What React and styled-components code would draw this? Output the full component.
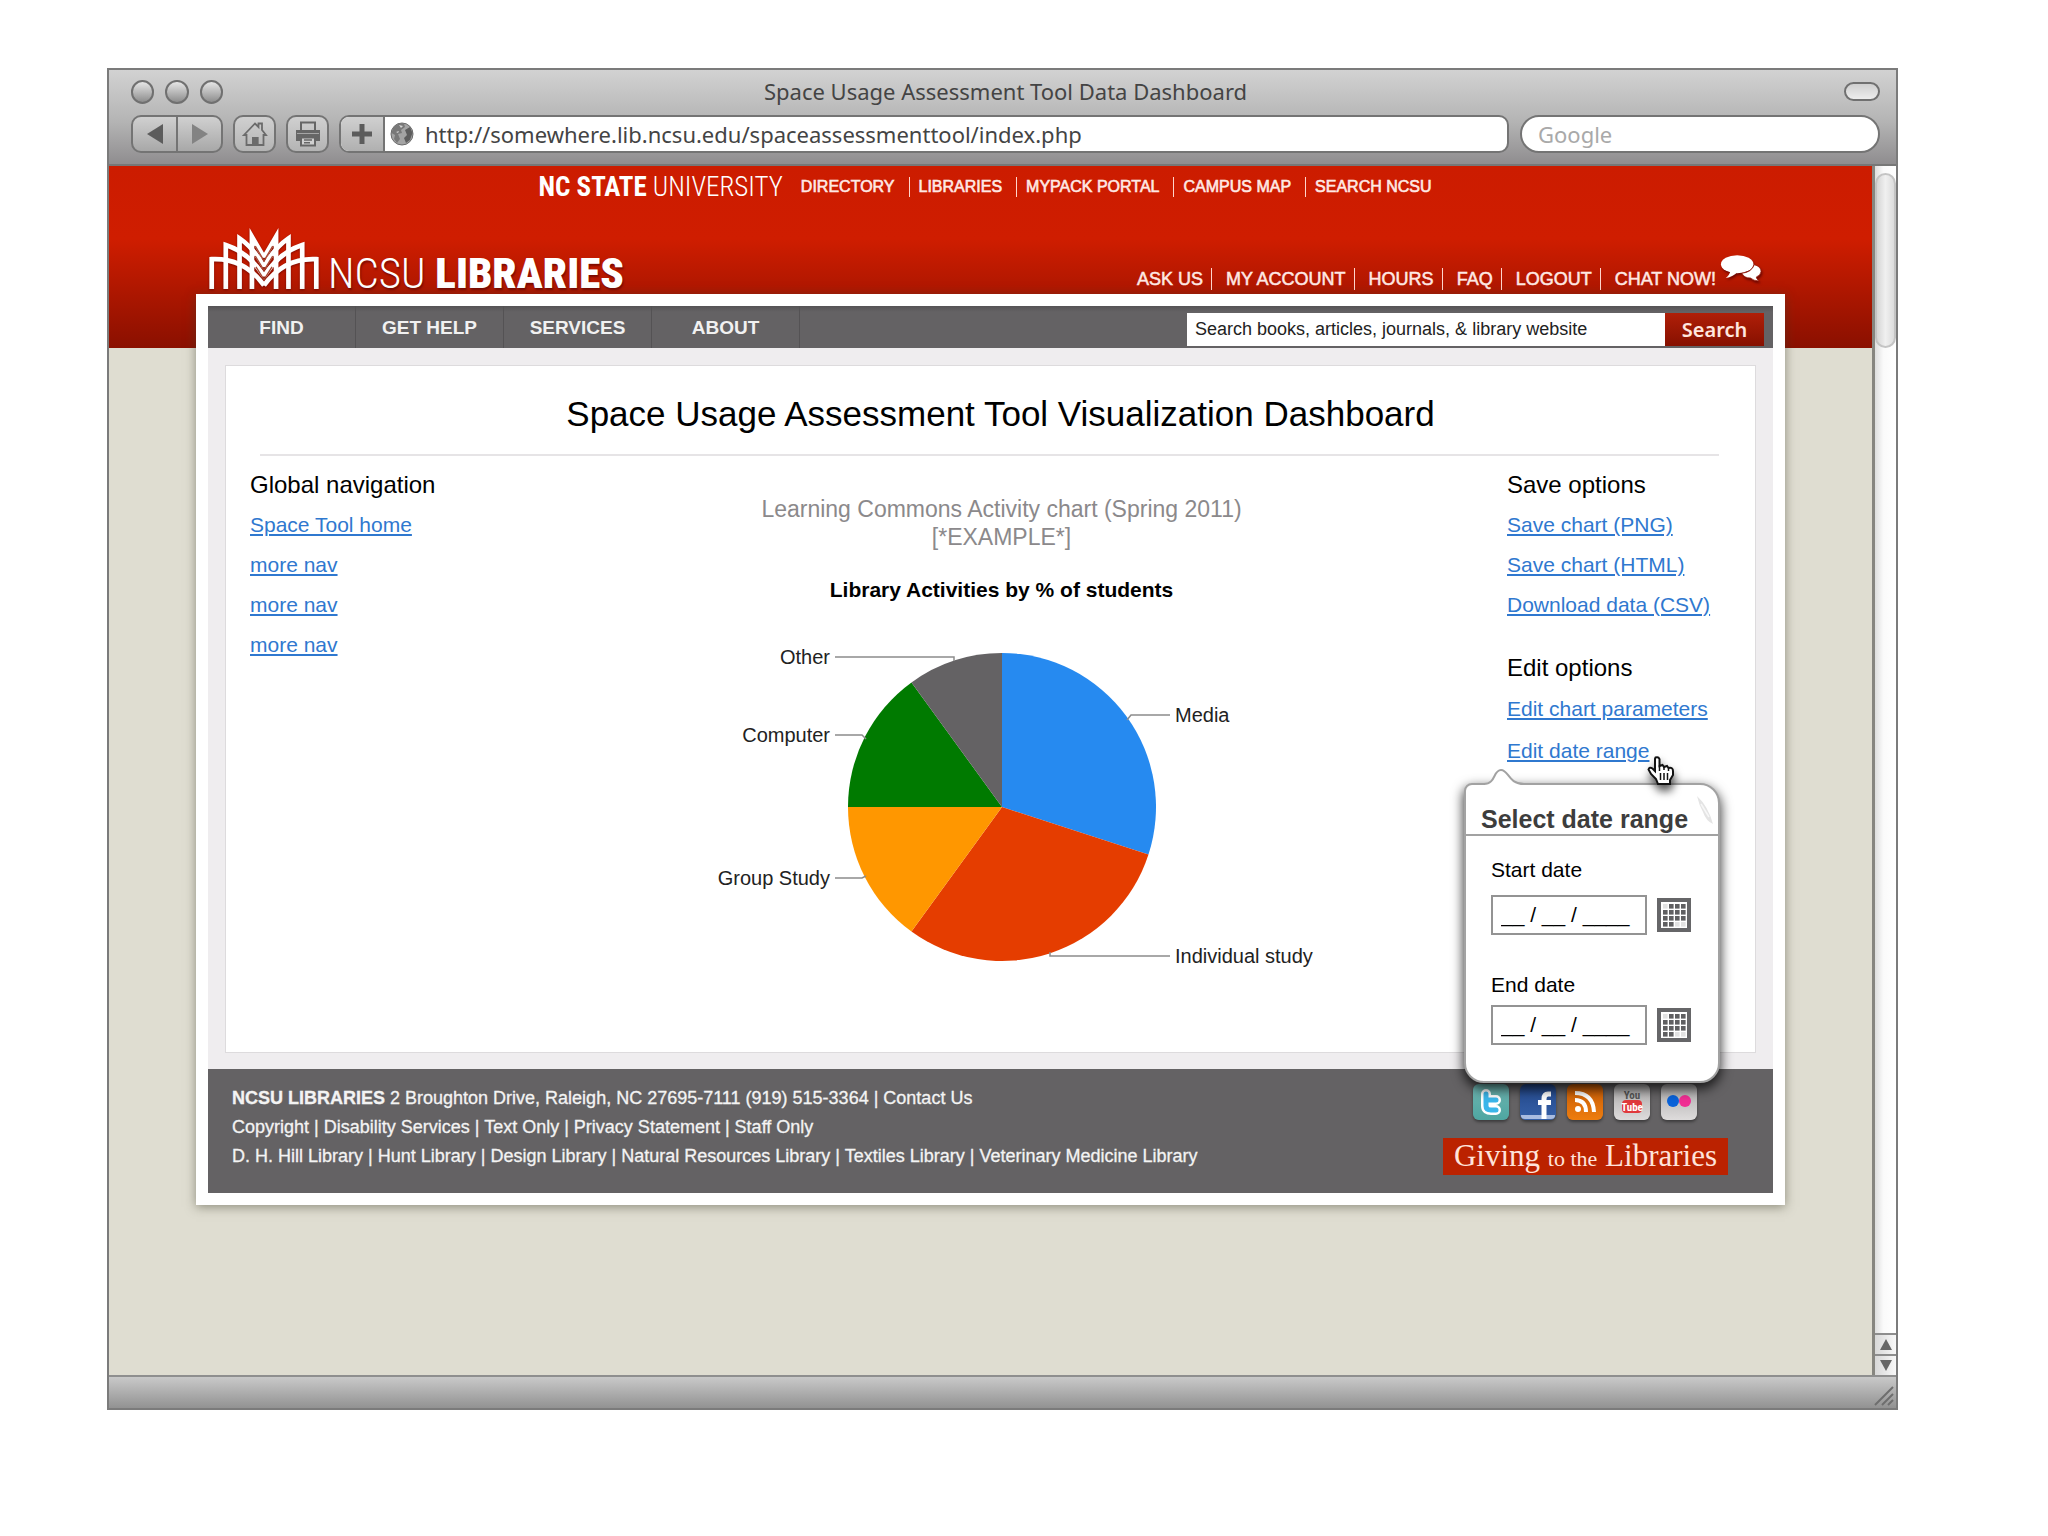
import styled, { createGlobalStyle } from "styled-components";

import { useState } from "react";


const slices = [
    { name: "Media", value: 30, color: "#268af0" },
    { name: "Individual study", value: 30, color: "#e53d00" },
    { name: "Group Study", value: 15, color: "#ff9700" },
    { name: "Computer", value: 15, color: "#007a00" },
    { name: "Other", value: 10, color: "#646264" },
];

// where every label and its leader line go, in chart units
const labels = [
    { name: "Media", x: 503, y: 82, anchor: "start", line: "M455 80 L459 75 H498" },
    { name: "Individual study", x: 503, y: 323, anchor: "start", line: "M378 312 V316 H498" },
    { name: "Group Study", x: 158, y: 245, anchor: "end", line: "M163 238 H190 L194 236" },
    { name: "Computer", x: 158, y: 102, anchor: "end", line: "M163 95 H190 L194 99" },
    { name: "Other", x: 158, y: 24, anchor: "end", line: "M163 17 H282 V21" },
];

const universityLinks = ["DIRECTORY", "LIBRARIES", "MYPACK PORTAL", "CAMPUS MAP", "SEARCH NCSU"];
const accountLinks = ["ASK US", "MY ACCOUNT", "HOURS", "FAQ", "LOGOUT", "CHAT NOW!"];
const menuItems = ["FIND", "GET HELP", "SERVICES", "ABOUT"];
const navLinks = ["Space Tool home", "more nav", "more nav", "more nav"];
const saveLinks = ["Save chart (PNG)", "Save chart (HTML)", "Download data (CSV)"];

const PieChart = () => {
    const cx = 330, cy = 167, r = 154;
    let total = 0;

    const point = (value) => {
        const angle = (value / 100) * 2 * Math.PI;
        return `${cx + r * Math.sin(angle)} ${cy - r * Math.cos(angle)}`;
    }

    return (
        <ChartSvg viewBox="0 0 660 340" role="img" aria-label="Library Activities by % of students">
            {slices.map((slice) => {
                const start = point(total);
                total += slice.value;
                return (
                    <path
                        key={slice.name}
                        d={`M${cx} ${cy} L${start} A${r} ${r} 0 0 1 ${point(total)} Z`}
                        fill={slice.color}
                    />
                )
            })}
            {labels.map((label) => (
                <g key={label.name}>
                    <path d={label.line} fill="none" stroke="#8c8c8c" strokeWidth="1.5" />
                    <text x={label.x} y={label.y} textAnchor={label.anchor}>{label.name}</text>
                </g>
            ))}
        </ChartSvg>
    )
}

const LibraryLogo = () => {
    const half = (
        <>
            <path d="M34 206 V117 Q130 112 190 195" />
            <path d="M76 206 V75 Q146 98 190 168" />
            <path d="M117 206 V55 Q160 84 190 140" />
            <path d="M154 206 V50 L190 112" />
        </>
    );
    return (
        <LogoSvg viewBox="24 24 332 182" fill="none" stroke="#fff" strokeWidth="14" strokeMiterlimit="6">
            {half}
            <g transform="matrix(-1 0 0 1 380 0)">{half}</g>
            <path d="M164 78 L190 122 L216 78 M164 108 L190 150 L216 108 M166 140 L190 178 L214 140" stroke="#a8442f" strokeWidth="4" />
        </LogoSvg>
    )
}

const HomeIcon = () => (
    <svg width="26" height="26" viewBox="0 0 26 26" fill="none" stroke="#6b6b6b" strokeWidth="1.8">
        <path d="M2 14 L13 2.5 L16.5 6 V2.5 H20 V9 L24 14 H21.5 V24 H15.5 V17 H11 V24 H4.5 V14 Z" />
        <path d="M11 17 H15.5 V24 H11 Z" fill="#6b6b6b" />
    </svg>
)

const PrintIcon = () => (
    <svg width="28" height="26" viewBox="0 0 28 26" fill="none" stroke="#666" strokeWidth="2">
        <path d="M7 9 V1.5 H21 V9" />
        <path d="M2 9 H26 V20 H22 V16 H6 V20 H2 Z" fill="#666" stroke="none" />
        <path d="M7 16.5 H21 V24.5 H7 Z" fill="#d0d0d0" />
        <path d="M3 12.5 H25" stroke="#a5a5a5" strokeWidth="1" />
        <path d="M10 19 H18 M10 21.8 H16" strokeWidth="1.4" />
    </svg>
)

const GlobeIcon = () => (
    <svg width="24" height="24" viewBox="0 0 24 24">
        <circle cx="12" cy="12" r="11" fill="#a4a4a4" stroke="#6a6a6a" />
        <path d="M3 6 Q8 0 14 1.5 L15 5 L11 8 L12 11 L8 12 L10 17 L7 21 L4 17 L5 13 L1.5 11 Z" fill="#787878" />
        <path d="M15 8 L20 5 L22.5 11 L20 18 L16 21 L14 16 L17 13 Z" fill="#5e5e5e" />
        <path d="M9 3 L13 4 L11 6 Z M6 10 L9 9 L8 11 Z" fill="#d4d4d4" />
    </svg>
)

const CalendarIcon = () => {
    const cells = [];
    for (let row = 0; row < 4; row++) {
        for (let col = 0; col < 4; col++) {
            const faint = (row === 0 && col === 0) || (row === 3 && col > 1);
            cells.push(
                <rect
                    key={`${row}-${col}`}
                    x={6 + col * 6}
                    y={6 + row * 6}
                    width="4.6"
                    height="4.6"
                    fill={faint ? "#e2e2e2" : "#5f5f61"}
                />
            );
        }
    }
    return (
        <svg width="34" height="34" viewBox="0 0 34 34">
            <rect width="34" height="34" fill="#666668" />
            <rect x="4" y="4" width="26" height="26" fill="#fff" />
            {cells}
        </svg>
    )
}

const ChatIcon = () => (
    <ChatSvg viewBox="0 0 44 28" fill="#fff">
        <ellipse cx="18" cy="9.5" rx="17" ry="9.5" />
        <path d="M11 16 Q10 21 6 24 Q14 23 19 17 Z" />
        <path d="M23 19 Q33 18 36 10 Q43 12 43 17 Q43 21 38 23 Q38 25 41 27 Q35 27 32 24 Q25 24 23 19 Z" stroke="#9a1a0b" strokeWidth="0.8" />
    </ChatSvg>
)

const HandCursor = () => (
    <CursorSvg viewBox="0 0 28 30">
        <path
            d="M8.5 1.5 Q11.5 0.5 12.5 3 V10 L15.5 9 L17 11 L20 10 L21.5 12 Q26 11 26 15 V19 L23 24 V28 H11 L9 23 L4 18 L1.5 13.5 Q2.5 10.5 5.5 12.5 L8 15 V3 Z"
            fill="#fff"
            stroke="#111"
            strokeWidth="2"
        />
        <path d="M13.5 17 V24 M17 17 V24 M20.5 17 V24 M12.5 9 V15 M17 10.5 V14 M21.5 12 V15" stroke="#111" strokeWidth="1.5" />
    </CursorSvg>
)

const SocialIcons = () => (
    <SocialList>
        <SocialLink href="#" aria-label="Twitter" $from="#6fb5b1" $to="#4ea6a1">
            <svg width="36" height="36" viewBox="0 0 36 36">
                <path d="M13 10 V22 Q13 26 18 26 H23 M13 16 H23" fill="none" stroke="#fff" strokeWidth="10" strokeLinecap="round" strokeLinejoin="round" />
                <path d="M13 10 V22 Q13 26 18 26 H23 M13 16 H23" fill="none" stroke="#3bb6ea" strokeWidth="5" strokeLinecap="round" strokeLinejoin="round" />
            </svg>
        </SocialLink>
        <SocialLink href="#" aria-label="Facebook" $from="#24488a" $to="#3560a8">
            <svg width="36" height="36" viewBox="0 0 36 36">
                <path d="M1 31 H35 V32 Q35 35 31 35 H5 Q1 35 1 32 Z" fill="#a9bce0" />
                <path d="M24 35 V15 Q24 10 28 10 H31 M18 18.5 H31" fill="none" stroke="#fff" strokeWidth="5" />
            </svg>
        </SocialLink>
        <SocialLink href="#" aria-label="RSS" $from="#c55a06" $to="#ee7d0e">
            <svg width="36" height="36" viewBox="0 0 36 36" fill="none" stroke="#fff" strokeWidth="4">
                <circle cx="11" cy="25" r="3" fill="#fff" stroke="none" />
                <path d="M8 16 Q19 16 19 28 M8 9 Q26 9 27 28" />
            </svg>
        </SocialLink>
        <SocialLink href="#" aria-label="YouTube" $from="#a9a7a7" $to="#dedcdc">
            <YouTubeSvg viewBox="0 0 36 36">
                <text x="18" y="15" fill="#555">You</text>
                <rect x="8" y="16" width="20" height="13" rx="4" fill="#e0393c" />
                <text x="18" y="27" fill="#fff">Tube</text>
            </YouTubeSvg>
        </SocialLink>
        <SocialLink href="#" aria-label="Flickr" $from="#a9a7a7" $to="#dedcdc">
            <svg width="36" height="36" viewBox="0 0 36 36">
                <circle cx="12" cy="17" r="6" fill="#0a62d8" />
                <circle cx="24" cy="17" r="6" fill="#f02e93" />
            </svg>
        </SocialLink>
    </SocialList>
)

const DateField = ({ id, label, gap }) => {
    const [value, setValue] = useState("__ / __ / ____");

    return (
        <Field $gap={gap}>
            <label htmlFor={id}>{label}</label>
            <FieldRow>
                <DateInput id={id} name={id} type="text" value={value} onChange={(e) => setValue(e.target.value)} />
                <PlainButton type="button" aria-label={`Pick ${label}`}>
                    <CalendarIcon />
                </PlainButton>
            </FieldRow>
        </Field>
    )
}

const DateRangePopup = () => (
    <Popup>
        <PopupTip viewBox="0 0 48 17">
            <path d="M1 15 C12 15 9 1 17 1 C25 1 24 15 40 15 V17 H1 Z" fill="#fff" />
            <path d="M0 15 C12 15 9 1 17 1 C25 1 24 15 40 15" fill="none" stroke="#a2a2a2" strokeWidth="2" />
        </PopupTip>
        <PopupTitle>Select date range</PopupTitle>
        <PopupCorner viewBox="0 0 18 30">
            <path d="M1 1 Q12 11 17 29 Q10 26 7 17 Q3 10 1 1 Z" fill="#e4e4e4" />
            <path d="M5 9 L13 22" stroke="#f7f7f7" strokeWidth="1.5" />
        </PopupCorner>
        <PopupForm>
            <DateField id="start-date" label="Start date" gap="13px" />
            <DateField id="end-date" label="End date" gap="8px" />
        </PopupForm>
    </Popup>
)

const App = () => {
    const [showPopup, setShowPopup] = useState(true);
    const [url, setUrl] = useState("http://somewhere.lib.ncsu.edu/spaceassessmenttool/index.php");
    const [query, setQuery] = useState("Search books, articles, journals, & library website");

    const handleToggle = (e) => {
        e.preventDefault();
        setShowPopup(!showPopup);
    }

    return (
        <>
            <GlobalStyle />
            <BrowserWindow>
                <Chrome>
                    <TitleBar>
                        <Lights>
                            <Light type="button" aria-label="Close" />
                            <Light type="button" aria-label="Minimize" />
                            <Light type="button" aria-label="Zoom" />
                        </Lights>
                        <WindowTitle>Space Usage Assessment Tool Data Dashboard</WindowTitle>
                        <Pill type="button" aria-label="Toggle toolbar" />
                    </TitleBar>
                    <Toolbar>
                        <ButtonPair>
                            <PairButton type="button" aria-label="Back">
                                <svg width="16" height="20" viewBox="0 0 16 20"><path d="M16 0 V20 L0 10 Z" fill="#5c5c5c" /></svg>
                            </PairButton>
                            <PairButton type="button" aria-label="Forward">
                                <svg width="16" height="20" viewBox="0 0 16 20"><path d="M0 0 V20 L16 10 Z" fill="#838383" /></svg>
                            </PairButton>
                        </ButtonPair>
                        <ToolButton type="button" aria-label="Home"><HomeIcon /></ToolButton>
                        <ToolButton type="button" aria-label="Print"><PrintIcon /></ToolButton>
                        <AddressBar>
                            <AddButton type="button" aria-label="Add bookmark">
                                <svg width="22" height="22" viewBox="0 0 22 22"><path d="M11 1 V21 M1 11 H21" stroke="#5c5c5c" strokeWidth="5" /></svg>
                            </AddButton>
                            <GlobeIcon />
                            <AddressInput type="text" aria-label="Address" value={url} onChange={(e) => setUrl(e.target.value)} />
                        </AddressBar>
                        <GoogleInput type="text" aria-label="Web search" placeholder="Google" />
                    </Toolbar>
                </Chrome>

                <Viewport>
                    <Page>
                        <PageHeader>
                            <UniversityBar>
                                <UniversityName href="#"><b>NC STATE</b> UNIVERSITY</UniversityName>
                                {universityLinks.map((link) => <UniversityLink key={link} href="#">{link}</UniversityLink>)}
                            </UniversityBar>
                            <BrandBar>
                                <Brand href="#">
                                    <LibraryLogo />
                                    <BrandName>NCSU <b>LIBRARIES</b></BrandName>
                                </Brand>
                                <AccountNav>
                                    {accountLinks.map((link) => <AccountLink key={link} href="#">{link}</AccountLink>)}
                                    <ChatIcon />
                                </AccountNav>
                            </BrandBar>
                        </PageHeader>

                        <Container>
                            <MenuBar>
                                {menuItems.map((item) => <MenuLink key={item} href="#">{item}</MenuLink>)}
                                <SearchForm onSubmit={(e) => e.preventDefault()}>
                                    <SearchInput type="text" aria-label="Search the library" value={query} onChange={(e) => setQuery(e.target.value)} />
                                    <SearchButton type="submit">Search</SearchButton>
                                </SearchForm>
                            </MenuBar>

                            <Content>
                                <Panel>
                                    <PageTitle>Space Usage Assessment Tool Visualization Dashboard</PageTitle>
                                    <Divider />
                                    <Columns>
                                        <nav>
                                            <SideHeading>Global navigation</SideHeading>
                                            <LinkList>
                                                {navLinks.map((link, i) => <li key={i}><SideLink href="#">{link}</SideLink></li>)}
                                            </LinkList>
                                        </nav>
                                        <ChartArea>
                                            <Caption>Learning Commons Activity chart (Spring 2011)<br />[*EXAMPLE*]</Caption>
                                            <ChartTitle>Library Activities by % of students</ChartTitle>
                                            <PieChart />
                                        </ChartArea>
                                        <Options>
                                            <section>
                                                <SideHeading>Save options</SideHeading>
                                                <LinkList>
                                                    {saveLinks.map((link) => <li key={link}><SideLink href="#">{link}</SideLink></li>)}
                                                </LinkList>
                                            </section>
                                            <section>
                                                <SideHeading>Edit options</SideHeading>
                                                <LinkList $line="42px">
                                                    <li><SideLink href="#">Edit chart parameters</SideLink></li>
                                                    <li>
                                                        <SideLink href="#" onClick={handleToggle}>Edit date range</SideLink>
                                                        {showPopup && <DateRangePopup />}
                                                        <HandCursor />
                                                    </li>
                                                </LinkList>
                                            </section>
                                        </Options>
                                    </Columns>
                                </Panel>
                            </Content>

                            <Footer>
                                <FooterText>
                                    <p><b>NCSU LIBRARIES</b> 2 Broughton Drive, Raleigh, NC 27695-7111 (919) 515-3364 | <a href="#">Contact Us</a></p>
                                    <p><a href="#">Copyright</a> | <a href="#">Disability Services</a> | <a href="#">Text Only</a> | <a href="#">Privacy Statement</a> | <a href="#">Staff Only</a></p>
                                    <p><a href="#">D. H. Hill Library</a> | <a href="#">Hunt Library</a> | <a href="#">Design Library</a> | <a href="#">Natural Resources Library</a> | <a href="#">Textiles Library</a> | <a href="#">Veterinary Medicine Library</a></p>
                                </FooterText>
                                <FooterSide>
                                    <SocialIcons />
                                    <GivingLink href="#">Giving <small>to the</small> Libraries</GivingLink>
                                </FooterSide>
                            </Footer>
                        </Container>
                    </Page>

                    <Scrollbar>
                        <Thumb />
                        <ScrollButton type="button" aria-label="Scroll up">
                            <svg width="12" height="11" viewBox="0 0 12 11"><path d="M6 0 L12 11 H0 Z" fill="#666" /></svg>
                        </ScrollButton>
                        <ScrollButton type="button" aria-label="Scroll down">
                            <svg width="12" height="11" viewBox="0 0 12 11"><path d="M0 0 H12 L6 11 Z" fill="#666" /></svg>
                        </ScrollButton>
                    </Scrollbar>
                </Viewport>

                <StatusBar>
                    <svg width="20" height="20" viewBox="0 0 20 20" stroke="#6e6e6e" strokeWidth="2">
                        <path d="M1 19 L19 1 M8 19 L19 8 M14 19 L19 14" />
                    </svg>
                </StatusBar>
            </BrowserWindow>
        </>
    )
}

const GlobalStyle = createGlobalStyle`
    *{
        box-sizing: border-box;
    }

    body{
        margin: 0;
        background-color: white;
        color: black;
        font-family: "Liberation Sans", Arial, sans-serif;
        font-size: 21px;
    }

    h1, h2, p, ul{
        margin: 0;
        padding: 0;
        font-weight: normal;
    }

    a{
        color: inherit;
        text-decoration: none;
    }

    button, input{
        font: inherit;
        color: inherit;
        margin: 0;
        padding: 0;
        border: none;
    }

    svg{
        display: block;
        flex-shrink: 0;
    }
`

const BrowserWindow = styled.div`
    margin: 68px 150px 0 107px;
    border: 2px solid #7b7b7b;
    font-family: "Liberation Sans", Arial, sans-serif;
`

const Chrome = styled.header`
    padding: 9px 16px 11px 22px;
    background: linear-gradient(#d2d2d2, #b4b4b4 55%, #8f8d8f);
    border-bottom: 2px solid #777;
    color: #444;
    font-family: "Noto Sans", "Open Sans", sans-serif;
    font-size: 22px;
`

const TitleBar = styled.div`
    display: grid;
    grid-template-columns: 92px 1fr 92px;
    align-items: center;
    height: 25px;
    margin-bottom: 11px;
`

const Lights = styled.div`
    display: flex;
    gap: 11px;
`

const Light = styled.button`
    width: 24px;
    height: 24px;
    border: 2px solid #707070;
    border-radius: 50%;
    background: linear-gradient(#e6e6e6, #8d8d8d);
`

const WindowTitle = styled.div`
    text-align: center;
    line-height: 25px;
    white-space: nowrap;
`

const Pill = styled.button`
    justify-self: end;
    width: 36px;
    height: 19px;
    border: 2px solid #707070;
    border-radius: 10px;
    background: linear-gradient(#cfcfcf, #ededed);
`

const Toolbar = styled.div`
    display: flex;
    align-items: center;
    height: 38px;
`

const ToolButton = styled.button`
    display: flex;
    align-items: center;
    justify-content: center;
    width: 43px;
    height: 38px;
    margin-right: 10px;
    border: 2px solid #747474;
    border-radius: 10px;
    background: linear-gradient(#d0d0d0, #b4b4b4);
`

const ButtonPair = styled.div`
    display: flex;
    width: 92px;
    height: 38px;
    margin-right: 10px;
    border: 2px solid #747474;
    border-radius: 10px;
    background: linear-gradient(#d0d0d0, #a8a8a8);
`

const PairButton = styled.button`
    flex: 1;
    display: flex;
    align-items: center;
    justify-content: center;
    background: none;

    & + &{
        border-left: 2px solid #747474;
    }
`

const AddressBar = styled.div`
    flex: 1;
    display: flex;
    align-items: center;
    height: 38px;
    border: 2px solid #747474;
    border-radius: 10px;
    background-color: white;
    overflow: hidden;
`

const AddButton = styled.button`
    display: flex;
    align-items: center;
    justify-content: center;
    width: 44px;
    height: 34px;
    margin-right: 5px;
    border-right: 2px solid #747474;
    background: linear-gradient(#d0d0d0, #b0b0b0);
`

const AddressInput = styled.input`
    flex: 1;
    min-width: 0;
    margin-left: 11px;
    outline: none;
    background: none;
`

const GoogleInput = styled.input`
    width: 360px;
    height: 38px;
    margin-left: 11px;
    padding: 0 16px;
    border: 2px solid #747474;
    border-radius: 19px;
    background-color: white;

    &::placeholder{
        color: #a9a9a9;
        opacity: 1;
    }
`

const Viewport = styled.div`
    display: flex;
    align-items: stretch;
`

const Page = styled.div`
    flex: 1;
    padding: 0 87px 170px;
    background: linear-gradient(#cc1c00, #cf1d00 40%, #8a1000) no-repeat 0 0 / 100% 182px #dfddd1;
`

const PageHeader = styled.header`
    display: flex;
    flex-direction: column;
    justify-content: space-between;
    height: 128px;
    padding: 6px 23px 0 12px;
    color: #ffe9e4;
`

const UniversityBar = styled.div`
    display: flex;
    justify-content: center;
    align-items: center;
    height: 30px;
    font-size: 16px;
`

const UniversityName = styled.a`
    margin-right: 18px;
    color: white;
    font-family: "Roboto Condensed", "Liberation Sans", sans-serif;
    font-size: 27px;
    font-weight: 300;

    b{
        font-weight: 700;
    }
`

const UniversityLink = styled.a`
    padding-right: 14px;
    line-height: 20px;
    -webkit-text-stroke: 0.6px;

    & + &{
        padding-left: 9px;
        border-left: 1px solid #ffd5cc;
    }

    &:last-child{
        padding-right: 0;
    }
`

const BrandBar = styled.div`
    display: flex;
    justify-content: space-between;
    align-items: flex-end;
`

const Brand = styled.a`
    display: flex;
    align-items: flex-end;
    gap: 8px;
    color: white;
    text-shadow: 1px 2px 2px rgba(80, 0, 0, 0.6);
`

const LogoSvg = styled.svg`
    width: 112px;
    height: 61px;
    margin-bottom: 5px;
    filter: drop-shadow(0 1px 1px rgba(80, 0, 0, 0.6));
`

const BrandName = styled.span`
    font-family: "Roboto Condensed", "Liberation Sans", sans-serif;
    font-size: 43px;
    font-weight: 300;
    line-height: 42px;

    b{
        font-weight: 900;
    }
`

const AccountNav = styled.nav`
    display: flex;
    align-items: flex-end;
    padding-bottom: 4px;
    font-size: 18px;
    line-height: 22px;
`

const AccountLink = styled.a`
    padding-right: 8px;
    -webkit-text-stroke: 0.5px;

    & + &{
        padding-left: 14px;
        border-left: 1px solid #ffd5cc;
    }

    &:last-of-type{
        padding-right: 4px;
    }
`

const ChatSvg = styled.svg`
    width: 42px;
    height: 27px;
    margin-bottom: 8px;
    filter: drop-shadow(1px 2px 1px rgba(80, 0, 0, 0.7));
`

const Container = styled.main`
    position: relative;
    border: 12px solid white;
    background-color: #efedef;
    box-shadow: 0 2px 10px rgba(60, 60, 40, 0.5);
`

const MenuBar = styled.nav`
    display: flex;
    align-items: stretch;
    height: 42px;
    padding-right: 9px;
    background: linear-gradient(#555355, #646264 6px);
    color: #f1f1f1;
    font-size: 19px;
    font-weight: bold;
`

const MenuLink = styled.a`
    width: 148px;
    border-right: 1px solid #545254;
    line-height: 43px;
    text-align: center;
`

const SearchForm = styled.form`
    display: flex;
    margin: 7px 0 2px auto;
    color: #222;
    font-size: 18px;
    font-weight: normal;
`

const SearchInput = styled.input`
    width: 478px;
    padding: 0 8px;
    background-color: white;
`

const SearchButton = styled.button`
    width: 99px;
    background: linear-gradient(#b01f08, #861000);
    color: #ffe6df;
    font-family: "Noto Sans", "Open Sans", sans-serif;
    font-size: 20px;
    font-weight: 600;
    line-height: 30px;
`

const Content = styled.div`
    padding: 17px 17px 16px;
`

const Panel = styled.section`
    padding: 0 0 72px;
    border: 1px solid #dddbdd;
    background-color: white;
`

const PageTitle = styled.h1`
    padding: 26px 0 0 20px;
    font-size: 35px;
    line-height: 44px;
    text-align: center;
`

const Divider = styled.hr`
    height: 2px;
    margin: 18px 36px 0 34px;
    border: none;
    background-color: #e6e4e6;
`

const Columns = styled.div`
    display: grid;
    grid-template-columns: 246px 1fr 248px;
    margin-left: 24px;
    padding-top: 14px;
`

const SideHeading = styled.h2`
    margin-bottom: 5px;
    font-size: 24px;
    line-height: 30px;
`

const LinkList = styled.ul`
    list-style: none;
    line-height: ${(p) => p.$line || "40px"};

    li{
        position: relative;
        white-space: nowrap;
    }
`

const SideLink = styled.a`
    color: #2f78cf;
    text-decoration: underline;
`

const ChartArea = styled.div`
    display: flex;
    flex-direction: column;
    align-items: center;
    padding-top: 25px;
`

const Caption = styled.p`
    margin-bottom: 27px;
    color: #8b898b;
    font-size: 23px;
    line-height: 28px;
    text-align: center;
`

const ChartTitle = styled.h2`
    margin-bottom: 38px;
    font-size: 21px;
    font-weight: bold;
    line-height: 24px;
`

const ChartSvg = styled.svg`
    width: 660px;
    height: 340px;
    font-size: 20px;
    fill: #222;
`

const Options = styled.div`
    display: flex;
    flex-direction: column;
    gap: 28px;
`

const Popup = styled.div`
    position: absolute;
    top: 53px;
    left: -43px;
    z-index: 1;
    width: 256px;
    height: 300px;
    border: 2px solid #a2a2a2;
    border-radius: 8px 20px 20px 20px;
    background-color: white;
    box-shadow: 0 5px 12px 1px rgba(0, 0, 0, 0.75);
    line-height: 24px;
`

const PopupTip = styled.svg`
    position: absolute;
    top: -16px;
    left: 18px;
    width: 48px;
    height: 17px;
`

const PopupTitle = styled.h2`
    padding: 20px 0 1px 15px;
    border-bottom: 2px solid #a2a2a2;
    color: #3d3d3d;
    font-size: 25px;
    font-weight: bold;
    line-height: 28px;
`

const PopupCorner = styled.svg`
    position: absolute;
    top: 10px;
    right: 4px;
    width: 18px;
    height: 30px;
`

const PopupForm = styled.form`
    display: flex;
    flex-direction: column;
    gap: 38px;
    padding: 22px 0 0 25px;
`

const Field = styled.div`
    display: flex;
    flex-direction: column;
    gap: ${(p) => p.$gap};
`

const FieldRow = styled.div`
    display: flex;
    align-items: center;
    gap: 10px;
`

const DateInput = styled.input`
    width: 156px;
    height: 40px;
    padding: 0 8px;
    border: 2px solid #939393;
    background-color: white;
`

const PlainButton = styled.button`
    background: none;
`

const CursorSvg = styled.svg`
    position: absolute;
    top: 26px;
    left: 140px;
    z-index: 2;
    width: 28px;
    height: 30px;
    filter: drop-shadow(1px 6px 4px rgba(0, 0, 0, 0.65));
    pointer-events: none;
`

const Footer = styled.footer`
    display: flex;
    justify-content: space-between;
    padding: 15px 45px 18px 24px;
    background-color: #646264;
    color: #f3f3f3;
`

const FooterText = styled.div`
    font-size: 18px;
    line-height: 29px;
    -webkit-text-stroke: 0.3px;
`

const FooterSide = styled.div`
    display: flex;
    flex-direction: column;
    gap: 18px;
`

const SocialList = styled.div`
    display: flex;
    gap: 11px;
    margin-left: 30px;
`

const SocialLink = styled.a`
    width: 36px;
    height: 36px;
    border-radius: 6px;
    overflow: hidden;
    background: linear-gradient(${(p) => p.$from}, ${(p) => p.$to});
    box-shadow: 0 2px 3px rgba(0, 0, 0, 0.4);
`

const YouTubeSvg = styled.svg`
    width: 36px;
    height: 36px;
    font-family: "Roboto Condensed", sans-serif;
    font-size: 11px;
    font-weight: bold;
    text-anchor: middle;
`

const GivingLink = styled.a`
    width: 285px;
    height: 37px;
    background-color: #bb2200;
    color: #ffe3da;
    font-family: "Liberation Serif", "Times New Roman", serif;
    font-size: 31px;
    line-height: 36px;
    text-align: center;
    white-space: nowrap;

    small{
        font-size: 22px;
    }
`

const Scrollbar = styled.aside`
    display: flex;
    flex-direction: column;
    width: 24px;
    border-left: 3px solid #878680;
    background: linear-gradient(to right, #dedede, #fafafa 40%, #fff);
`

const Thumb = styled.div`
    height: 175px;
    margin: 7px 0 auto;
    border: 2px solid #c4c4c4;
    border-radius: 11px;
    background: linear-gradient(to right, #d6d6d6, #f0f0f0 50%, #dcdcdc);
`

const ScrollButton = styled.button`
    display: flex;
    align-items: center;
    justify-content: center;
    height: 21px;
    border-top: 2px solid #8d8d8d;
    background: linear-gradient(to right, #d8d8d8, #f8f8f8);
`

const StatusBar = styled.footer`
    display: flex;
    justify-content: flex-end;
    align-items: flex-end;
    height: 33px;
    padding: 2px;
    border-top: 2px solid #8f8f8f;
    background: linear-gradient(#c9c9c9, #929292);
`

export default App;
